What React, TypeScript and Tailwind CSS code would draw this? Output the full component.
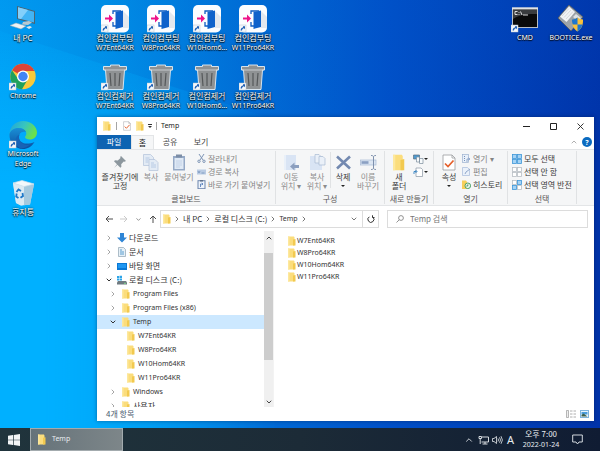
import type { ReactNode } from "react";
import { ChevronDown, ChevronRight, ChevronUp } from "lucide-react";

const latin = "font-['Noto_Sans','Noto_Sans_CJK_KR',sans-serif] text-[7px]";
const hangul = "font-['Noto_Sans_CJK_KR','Noto_Sans',sans-serif] text-[8px]";

function face(text: string) {
  return /[가-힣]/.test(text) ? hangul : latin;
}

/* ---------- desktop icons ---------- */

function ShortcutMark() {
  return (
    <g>
      <rect x="0" y="20" width="7" height="7" fill="#f4f7fa" stroke="#b9c4cf" strokeWidth="0.5" />
      <path d="M1.600 25.600c0-2 .8-3 2.400-3.200v-1.200l2 .1v2.900l-1-.9c-1.200.2-1.800 1-2 2.300z" fill="#1f5fb4" />
    </g>
  );
}

function PcIcon() {
  return (
    <svg viewBox="0 0 28 28" className="size-7">
      <path d="M8 1l18 5v13L8 14z" fill="#4b6472" />
      <path d="M9 2.300l16 4.500v10.800L9 13.200z" fill="#42b4f5" />
      <path d="M9 2.300l10 2.800-7 8.900-3-.8z" fill="#84d0fb" />
      <path d="M14 17l6-1 3 1.500-4 2.500-6-.5z" fill="#b9c8d0" />
      <path d="M1 20.500l6-2.500 10 3-5 3z" fill="#eef2f4" stroke="#9aaab3" strokeWidth="0.5" />
      <path d="M17 22l4-1 2 1.200-3 1.800z" fill="#dfe7ea" />
    </svg>
  );
}

function ChromeIcon() {
  return (
    <svg viewBox="0 0 28 28" className="size-7">
      <circle cx="14" cy="13.500" r="12.700" fill="#f9c93a" />
      <path d="M14 13.500L3 7.200A12.700 12.700 0 0 1 25.500 8H14z" fill="#db4437" />
      <path d="M3 7.200A12.700 12.700 0 0 0 13 26.200l5.500-9.500-9-.3z" fill="#1fa15d" />
      <circle cx="14" cy="13.500" r="6" fill="#fff" />
      <circle cx="14" cy="13.500" r="4.700" fill="#4285f4" />
      <ShortcutMark />
    </svg>
  );
}

function EdgeIcon() {
  return (
    <svg viewBox="0 0 28 28" className="size-7">
      <defs>
        <linearGradient id="edgeTop" x1="0" y1="0" x2="1" y2="0.4">
          <stop offset="0" stopColor="#1fa2dc" />
          <stop offset="0.55" stopColor="#37c5c0" />
          <stop offset="1" stopColor="#6be04c" />
        </linearGradient>
        <linearGradient id="edgeBody" x1="0" y1="0" x2="0" y2="1">
          <stop offset="0" stopColor="#1a8fd6" />
          <stop offset="1" stopColor="#0c4f9f" />
        </linearGradient>
      </defs>
      <path d="M.5 13C1 5 7 0 14 0c8 0 14 5.500 14 11.500 0 4.500-3.500 7-7 7-3 0-5-1.200-5-2.300 0-1 1.300-1.300 1.300-3.700C17.300 9 13 7 9.500 7 5 7 1.500 9.500.5 13z" fill="url(#edgeTop)" />
      <path d="M.5 13C1.500 9.500 5 7 9.500 7c3.500 0 6.500 1.500 7.500 4-5-1.500-7 2-7 5 0 6 7 8.500 15.500 5-2.500 4.500-7 7-11.500 7C6 28 0 21.500.5 13z" fill="url(#edgeBody)" />
      <path d="M10.500 13.500C8 20 14 25.500 21 23.500c-3 3-7 4.300-10 3.500-5.500-2.500-6-11-.5-13.500z" fill="#1763b6" />
      <ShortcutMark />
    </svg>
  );
}

function RecycleIcon() {
  return (
    <svg viewBox="0 0 28 28" className="size-7">
      <path d="M4 4l3 20 5 2.500 9-1L25 5l-11 2z" fill="#c5dfee" />
      <path d="M4 4l11 3v19l-3 .5L7 24z" fill="#dbeaf3" />
      <path d="M15 7l10-2-4 20.500-6 .7z" fill="#a5c9de" />
      <path d="M4 4l9-2.500L25 5l-10 2.500z" fill="#f3f8fb" stroke="#cfdfe9" strokeWidth="0.7" />
      <g fill="none" stroke="#1e78c8" strokeWidth="1.8">
        <path d="M7.500 13l2-2.500 2.500 1.500" />
        <path d="M13.500 14l.5 3-2.500 1.800" />
        <path d="M9.500 19l-2.300-1.500.5-3" />
      </g>
    </svg>
  );
}

function BootIcon() {
  return (
    <svg viewBox="0 0 28 28" className="size-7">
      <rect x="0" y="0" width="28" height="27.500" rx="5" fill="#fcfdff" />
      <path d="M22 6l6 6v11l-6 0z" fill="#e4e8ee" />
      <path d="M12 9V6h8M12 17v4h3" fill="none" stroke="#0d5cc2" strokeWidth="1.3" />
      <path d="M14.500 7L22 5.500v16.500l-7.500 2z" fill="#0f62cb" />
      <path d="M4 12.500h4V9.500l4 4-4 4v-3H4z" fill="#ee1289" />
      <ShortcutMark />
    </svg>
  );
}

function TrashIcon() {
  return (
    <svg viewBox="0 0 28 28" className="size-7">
      <path d="M2.500 3.500h7V2h9v1.500h7v3.500h-2L22 26.500H6L4.500 7h-2z" fill="#8f9294" stroke="#e6edf2" strokeWidth="0.9" />
      <path d="M3 7h22" stroke="#d5dadd" strokeWidth="0.8" />
      <path d="M9 10l1 13M14 10v13M19 10l-1 13" stroke="#55585a" strokeWidth="1.2" />
      <ShortcutMark />
    </svg>
  );
}

function CmdIcon() {
  return (
    <svg viewBox="0 0 28 28" className="size-7">
      <rect x="1.500" y="3" width="25" height="19.500" fill="#0a0a0a" stroke="#b8bec4" />
      <rect x="1" y="2.500" width="26" height="2" fill="#dfe3e6" />
      <path d="M2 14c8-5 16-5 24-5V5H2z" fill="#3a3c3e" />
      <path d="M6.500 6.500H4v3h2.500M8 7v.8M8 9v.8M9.500 6.500l1.500 3.500M12 10h5" fill="none" stroke="#eee" strokeWidth="0.9" />
      <ShortcutMark />
    </svg>
  );
}

function BooticeIcon() {
  return (
    <svg viewBox="0 0 28 28" className="size-7">
      <path d="M12 0l14 12-12 14L1 13z" fill="#9da3a8" stroke="#54595e" strokeWidth="0.8" />
      <path d="M12 1.500l6 5.500-8.500 10L3 11.500z" fill="#f2f3f4" />
      <path d="M5 11l7-7.500M7 12.500l7-7.500M9 14l7-7.500" stroke="#c2c6ca" strokeWidth="0.6" />
      <path d="M19 9l5 4-3 3-5-4z" fill="#dfe2e5" />
      <path d="M15 14.500c2 0 4-.7 5.500-2 1.500 1.300 3.500 2 5.500 2 .3 5.500-1.500 9.500-5.500 12-4-2.500-5.800-6.500-5.500-12z" fill="#f9c13a" />
      <path d="M20.500 12.500c-1.500 1.300-3.500 2-5.500 2 0 2 .1 3.500.7 5h4.800zM20.500 19.500v7c2.500-1.600 4.100-4 4.900-7z" fill="#1c76cf" />
    </svg>
  );
}

type Shortcut = { icon: ReactNode; lines: string[]; place?: string };

const leftIcons: Shortcut[] = [
  { icon: <PcIcon />, lines: ["내 PC"], place: "col-start-1 row-start-1" },
  { icon: <ChromeIcon />, lines: ["Chrome"], place: "col-start-1 row-start-2" },
  { icon: <EdgeIcon />, lines: ["Microsoft", "Edge"], place: "col-start-1 row-start-3" },
  { icon: <RecycleIcon />, lines: ["휴지통"], place: "col-start-1 row-start-4" },
  { icon: <BootIcon />, lines: ["컴인컴부팅", "W7Ent64KR"], place: "col-start-3 row-start-1" },
  { icon: <BootIcon />, lines: ["컴인컴부팅", "W8Pro64KR"], place: "col-start-4 row-start-1" },
  { icon: <BootIcon />, lines: ["컴인컴부팅", "W10Hom6..."], place: "col-start-5 row-start-1" },
  { icon: <BootIcon />, lines: ["컴인컴부팅", "W11Pro64KR"], place: "col-start-6 row-start-1" },
  { icon: <TrashIcon />, lines: ["컴인컴제거", "W7Ent64KR"], place: "col-start-3 row-start-2" },
  { icon: <TrashIcon />, lines: ["컴인컴제거", "W8Pro64KR"], place: "col-start-4 row-start-2" },
  { icon: <TrashIcon />, lines: ["컴인컴제거", "W10Hom6..."], place: "col-start-5 row-start-2" },
  { icon: <TrashIcon />, lines: ["컴인컴제거", "W11Pro64KR"], place: "col-start-6 row-start-2" },
];

const rightIcons: Shortcut[] = [
  { icon: <CmdIcon />, lines: ["CMD"] },
  { icon: <BooticeIcon />, lines: ["BOOTICE.exe"] },
];

function DesktopIcon({ icon, lines, place = "" }: Shortcut) {
  return (
    <button className={`flex w-[46px] flex-col items-center text-white ${place}`}>
      {icon}
      <span className="flex flex-col items-center [text-shadow:0_1px_1px_#000,0_0_2px_#000]">
        {lines.map((line) => (
          <span key={line} className={`whitespace-nowrap leading-[10px] ${face(line)}`}>
            {line}
          </span>
        ))}
      </span>
    </button>
  );
}

function Wallpaper() {
  return (
    <svg className="absolute inset-0 h-full w-full" viewBox="0 0 600 428" preserveAspectRatio="none" aria-hidden="true">
      <defs>
        <linearGradient id="sky" x1="0" y1="0" x2="1" y2="0">
          <stop offset="0" stopColor="#00a2f6" />
          <stop offset="0.17" stopColor="#0094ea" />
          <stop offset="0.4" stopColor="#0070d8" />
          <stop offset="0.65" stopColor="#0050c8" />
          <stop offset="1" stopColor="#0033a9" />
        </linearGradient>
        <linearGradient id="top" x1="0" y1="0" x2="0" y2="1">
          <stop offset="0" stopColor="#0058c8" stopOpacity="0.12" />
          <stop offset="0.35" stopColor="#0058c8" stopOpacity="0" />
        </linearGradient>
        <linearGradient id="glow" x1="0" y1="0" x2="0" y2="1">
          <stop offset="0" stopColor="#00b0ff" stopOpacity="0.15" />
          <stop offset="0.4" stopColor="#00b0ff" stopOpacity="1" />
        </linearGradient>
        <linearGradient id="fade" x1="0" y1="0" x2="1" y2="0">
          <stop offset="0.1" stopColor="#fff" />
          <stop offset="0.7" stopColor="#000" />
        </linearGradient>
        <mask id="glowMask">
          <rect width="400" height="428" fill="url(#fade)" />
        </mask>
      </defs>
      <rect width="600" height="428" fill="url(#sky)" />
      <rect width="600" height="428" fill="url(#top)" />
      <path d="M0 31L400 160V428H0z" fill="url(#glow)" mask="url(#glowMask)" />
    </svg>
  );
}

/* ---------- explorer icons ---------- */

function Folder({ className = "h-[11px] w-2" }: { className?: string }) {
  return (
    <svg viewBox="0 0 16 20" preserveAspectRatio="none" className={`shrink-0 ${className}`}>
      <path d="M0 1h12l1 2v16H0z" fill="#fbdd7c" />
      <path d="M10 7l5-1v13h-5z" fill="#f2c94f" />
      <path d="M0 1h3v18H0z" fill="#fde89d" />
    </svg>
  );
}

function PropsIcon({ className }: { className: string }) {
  return (
    <svg viewBox="0 0 14 17" className={className}>
      <path d="M1 1h9l3 3v12H1z" fill="#fff" stroke="#9a9da0" strokeWidth="0.8" />
      <path d="M10 1v3h3" fill="none" stroke="#9a9da0" strokeWidth="0.8" />
      <path d="M3 9.500l3 3 5.500-6" fill="none" stroke="#e5602c" strokeWidth="1.7" />
    </svg>
  );
}

function PinIcon() {
  return (
    <svg viewBox="0 0 16 16" className="size-4">
      <path d="M9 2l5 5-1.500.8-.8-.3-2.500 2.700.2 2.600-1 1-3-3L2 14l3-3.800-3-2.900 1-1 2.800.2L8.500 4 8.200 3z" fill="#8c979e" />
    </svg>
  );
}

function CopyIcon() {
  return (
    <svg viewBox="0 0 16 17" className="h-[17px] w-4">
      <g fill="#e3ebf5" stroke="#b2c2da" strokeWidth="0.7">
        <path d="M.5.5h7l3 3v8H.5z" />
        <path d="M6 5.500h6l3 3v8H6z" />
      </g>
      <path d="M8 9h3M8 11h5M8 13h5M2.500 4h4M2.500 6h3M2.500 8h3" stroke="#b7cae4" />
    </svg>
  );
}

function PasteIcon() {
  return (
    <svg viewBox="0 0 14 17" className="h-[17px] w-3.5">
      <rect x="1" y="2" width="12" height="14.500" fill="#95a9c6" />
      <rect x="2.500" y="4" width="9" height="11" fill="#dfe9f5" />
      <rect x="4" y="0.500" width="6" height="3" fill="#7c8da6" />
      <path d="M4 7h6M4 9h6M4 11h6M4 13h4" stroke="#bccde4" strokeWidth="0.8" />
    </svg>
  );
}

function CutIcon() {
  return (
    <svg viewBox="0 0 9 9" className="size-[9px]" fill="none" stroke="#7d94b5">
      <path d="M2 0l4 6M7 0L3 6" />
      <circle cx="2" cy="7.300" r="1.200" />
      <circle cx="7" cy="7.300" r="1.200" />
    </svg>
  );
}

function PathIcon() {
  return (
    <svg viewBox="0 0 9 9" className="size-[9px]">
      <rect y="2.500" width="9" height="5" fill="#b9cbe3" />
      <path d="M1 4l1 2 1-2M4.500 6h3" fill="none" stroke="#6f8db6" strokeWidth="0.7" />
    </svg>
  );
}

function PasteLinkIcon() {
  return (
    <svg viewBox="0 0 9 9" className="size-[9px]">
      <rect x="1" y="0.700" width="7" height="8" fill="#edf3fb" stroke="#6d85ad" />
      <path d="M3 0h3v1.500H3z" fill="#5f6f88" />
      <path d="M3.500 7V4h2M4.800 2.800L6 4 4.800 5.200" fill="none" stroke="#4a75b5" strokeWidth="0.8" />
    </svg>
  );
}

function MoveIcon() {
  return (
    <svg viewBox="0 0 17 17" className="size-[17px]">
      <path d="M1 1h12v15H1z" fill="#d9e4f4" />
      <path d="M1 1h2v15H1z" fill="#e9f0f9" />
      <path d="M7 12.500l4.500-4v2.500H16v3h-4.500V16.500z" fill="#8c9fbf" />
    </svg>
  );
}

function CopyToIcon() {
  return (
    <svg viewBox="0 0 17 17" className="size-[17px]">
      <path d="M1 2h12v14H1z" fill="#d9e4f4" />
      <g fill="#eaf0f8" stroke="#a9bad3" strokeWidth="0.7">
        <path d="M6 .5h4l2 2V9H6z" />
        <path d="M10 2.500h4l2 2V11h-6z" />
      </g>
    </svg>
  );
}

function DeleteIcon() {
  return (
    <svg viewBox="0 0 17 17" className="size-[17px]">
      <path d="M2 2.500l13 12M15 2.500l-13 12" stroke="#7389b0" strokeWidth="2.6" />
    </svg>
  );
}

function RenameIcon() {
  return (
    <svg viewBox="0 0 17 17" className="size-[17px]">
      <rect x="0.500" y="6" width="15.500" height="5" fill="#dce6f3" stroke="#a9bad3" strokeWidth="0.7" />
      <rect x="1.500" y="7.200" width="7" height="2.600" fill="#8ba0c2" />
      <path d="M11 1.500c1.500 0 2 .3 2.500 1 .5-.7 1-1 2.500-1M13.500 2.500v12M11 15.500c1.500 0 2-.3 2.500-1 .5.7 1 1 2.500 1" fill="none" stroke="#7e90ad" />
    </svg>
  );
}

function NewItemIcon() {
  return (
    <svg viewBox="0 0 11 10" className="h-2.5 w-[11px]">
      <path d="M.5 1h6v4h-6z" fill="#4d9ad0" stroke="#5c6f7e" strokeWidth="0.7" />
      <path d="M3.500 3h3v5h-3zM6.500 4.500H10V9.500H6.500z" fill="#f7fafc" stroke="#7b8d9c" strokeWidth="0.7" />
    </svg>
  );
}

function EasyAccessIcon() {
  return (
    <svg viewBox="0 0 11 10" className="h-2.5 w-[11px]">
      <path d="M3 1h5l1.500 1.500V9.500H3z" fill="#fff" stroke="#8a97a3" strokeWidth="0.7" />
      <path d="M1 7V4.500h2.500M2.500 3L4 4.500 2.500 6" fill="none" stroke="#2f7fc1" strokeWidth="0.9" />
    </svg>
  );
}

function OpenIcon() {
  return (
    <svg viewBox="0 0 9 9" className="size-[9px]">
      <rect x="0.500" y="0.500" width="6" height="8" fill="#e9f0f9" stroke="#9fb2d0" strokeWidth="0.7" />
      <path d="M2 2.500h1M2 4.500h1M2 6.500h1" stroke="#7590bb" />
      <path d="M5 8V5h2.500M6.500 3.800L8 5 6.500 6.200" fill="none" stroke="#7f99c1" strokeWidth="0.8" />
    </svg>
  );
}

function EditIcon() {
  return (
    <svg viewBox="0 0 9 9" className="size-[9px]">
      <path d="M.5.5h5l2 2v6h-7z" fill="#eaf1fa" stroke="#a8badb" strokeWidth="0.7" />
      <path d="M3 7l1-2 4-3" fill="none" stroke="#91a8cc" />
    </svg>
  );
}

function HistoryIcon() {
  return (
    <svg viewBox="0 0 9 9" className="size-[9px]">
      <path d="M0 .5h4l1 1.500v7H0z" fill="#f6cf5b" />
      <circle cx="5.800" cy="5.800" r="2.800" fill="#e8f6ec" stroke="#3e9a5a" strokeWidth="0.9" />
      <path d="M5.800 4.300v1.700H4.300" fill="none" stroke="#2d6f43" strokeWidth="0.7" />
    </svg>
  );
}

function SelectIcon({ filled }: { filled: boolean[] }) {
  return (
    <svg viewBox="0 0 10 10" className="size-2.5">
      {filled.map((on, i) => (
        <rect
          key={i}
          x={(i % 2) * 5 + 0.5}
          y={Math.floor(i / 2) * 5 + 0.5}
          width="4"
          height="4"
          fill={on ? "#a5d3f5" : "#fff"}
          stroke={on ? "#3f97d8" : "#b8bec4"}
          strokeWidth="0.8"
        />
      ))}
    </svg>
  );
}

/* ---------- ribbon ---------- */

function BigButton({ icon, label, width, muted, arrow }: { icon: ReactNode; label: string; width: string; muted?: boolean; arrow?: boolean }) {
  return (
    <button className={`flex flex-col items-center ${width} ${muted ? "text-[#8c8c8c]" : "text-[#3a3a3a]"}`}>
      <span className="flex h-5 items-center">{icon}</span>
      <span className="whitespace-pre text-center leading-[9px]">{label}</span>
      {arrow && <span className="mt-1 border-x-2 border-t-2 border-x-transparent border-t-[#222]" />}
    </button>
  );
}

function SmallButton({ icon, label, muted }: { icon: ReactNode; label: string; muted?: boolean }) {
  return (
    <button className={`flex h-[13px] items-center gap-[2px] whitespace-nowrap ${muted ? "text-[#848484]" : "text-[#3a3a3a]"}`}>
      {icon}
      {label}
    </button>
  );
}

function Group({ title, width, children }: { title: string; width: string; children: ReactNode }) {
  return (
    <div className={`flex shrink-0 flex-col border-r border-[#e0e2e4] ${width}`}>
      <div className="flex h-[43px] items-start pt-px">{children}</div>
      <div className="text-center leading-[10px] text-[#555]">{title}</div>
    </div>
  );
}

function Ribbon() {
  return (
    <div className={`flex border-y border-[#e3e5e7] bg-[#f5f6f7] py-px ${hangul}`}>
      <Group title="클립보드" width="w-[179px]">
        <BigButton icon={<PinIcon />} label={"즐겨찾기에\n고정"} width="ml-1 w-[38px]" />
        <BigButton icon={<CopyIcon />} label="복사" width="w-6" muted />
        <BigButton icon={<PasteIcon />} label="붙여넣기" width="w-8" muted />
        <div className="ml-[2px] flex flex-col">
          <SmallButton icon={<CutIcon />} label="잘라내기" muted />
          <SmallButton icon={<PathIcon />} label="경로 복사" muted />
          <SmallButton icon={<PasteLinkIcon />} label="바로 가기 붙여넣기" muted />
        </div>
      </Group>
      <Group title="구성" width="w-[109px]">
        <BigButton icon={<MoveIcon />} label={"이동\n위치 ▾"} width="ml-[2px] w-[26px]" muted />
        <BigButton icon={<CopyToIcon />} label={"복사\n위치 ▾"} width="w-[26px]" muted />
        <BigButton icon={<DeleteIcon />} label="삭제" width="border-l border-[#e0e2e4] w-[25px] h-9" arrow />
        <BigButton icon={<RenameIcon />} label={"이름\n바꾸기"} width="w-[26px]" muted />
      </Group>
      <Group title="새로 만들기" width="w-[49px]">
        <BigButton icon={<Folder className="h-[17px] w-3" />} label={"새\n폴더"} width="ml-[2px] w-6" />
        <div className="ml-[2px] flex flex-col">
          {[<NewItemIcon key="item" />, <EasyAccessIcon key="easy" />].map((icon, i) => (
            <button key={i} aria-label={i ? "빠른 연결" : "새 항목"} className="flex h-[13px] items-center">
              {icon}
              <span className="border-x-2 border-t-2 border-x-transparent border-t-[#222]" />
            </button>
          ))}
        </div>
      </Group>
      <Group title="열기" width="w-[74px]">
        <BigButton icon={<PropsIcon className="h-[17px] w-3.5" />} label="속성" width="ml-[2px] w-[26px]" arrow />
        <div className="flex flex-col">
          <SmallButton icon={<OpenIcon />} label="열기 ▾" muted />
          <SmallButton icon={<EditIcon />} label="편집" muted />
          <SmallButton icon={<HistoryIcon />} label="히스토리" />
        </div>
      </Group>
      <Group title="선택" width="w-[69px]">
        <div className="ml-1 flex flex-col">
          <SmallButton icon={<SelectIcon filled={[true, true, true, true]} />} label="모두 선택" />
          <SmallButton icon={<SelectIcon filled={[false, false, false, false]} />} label="선택 안 함" />
          <SmallButton icon={<SelectIcon filled={[false, true, true, false]} />} label="선택 영역 반전" />
        </div>
      </Group>
    </div>
  );
}

/* ---------- title bar, tabs, address ---------- */

function TitleBar() {
  return (
    <div className="flex h-[18px] items-center">
      <div className={`flex flex-1 items-center gap-1 pl-1.5 text-[#222] ${latin}`}>
        <Folder className="h-2.5 w-2" />
        <span className="ml-px h-2 w-px bg-[#a5a5a5]" />
        <button aria-label="속성" className="ml-[2px]">
          <PropsIcon className="h-2.5 w-2" />
        </button>
        <button aria-label="새 폴더" className="ml-px">
          <Folder className="h-2.5 w-2" />
        </button>
        <button aria-label="빠른 실행 도구 모음 사용자 지정" className="flex flex-col items-center gap-px">
          <span className="h-px w-1 bg-[#333]" />
          <span className="border-x-2 border-t-2 border-x-transparent border-t-[#333]" />
        </button>
        <span className="h-2 w-px bg-[#a5a5a5]" />
        <span>Temp</span>
      </div>
      <div className="flex text-[#222]">
        <button aria-label="최소화" className="grid h-[18px] w-[27px] place-items-center">
          <svg viewBox="0 0 7 7" className="size-[7px]">
            <path d="M0 3.500h7" stroke="currentColor" />
          </svg>
        </button>
        <button aria-label="최대화" className="grid h-[18px] w-[27px] place-items-center">
          <svg viewBox="0 0 7 7" className="size-[7px]">
            <path d="M.5.5h6v6h-6z" fill="none" stroke="currentColor" />
          </svg>
        </button>
        <button aria-label="닫기" className="grid h-[18px] w-[27px] place-items-center">
          <svg viewBox="0 0 7 7" className="size-[7px]">
            <path d="M.5.5l6 6M6.500.5l-6 6" stroke="currentColor" strokeWidth="0.9" />
          </svg>
        </button>
      </div>
    </div>
  );
}

function Tabs() {
  return (
    <div className={`flex h-3.5 items-stretch text-[#444] ${hangul}`}>
      <button className="w-[34px] bg-[#0d63b2] leading-3 text-white">파일</button>
      <button className="-mb-px w-[23px] border-x border-t border-[#e3e5e7] bg-[#f5f6f7] leading-3 text-[#222]">홈</button>
      <button className="w-8 leading-3">공유</button>
      <button className="w-[30px] leading-3">보기</button>
      <div className="ml-auto flex items-center gap-1 pr-[2px]">
        <button aria-label="리본 최소화">
          <ChevronUp className="size-2 text-[#888]" />
        </button>
        <button className="grid size-2.5 place-items-center rounded-full bg-[#0a6ac0] font-['Noto_Sans',sans-serif] text-[7px] font-bold leading-none text-white">
          ?
        </button>
      </div>
    </div>
  );
}

const crumbs = ["내 PC", "로컬 디스크 (C:)", "Temp"];

function AddressRow() {
  return (
    <div className="flex items-center gap-2 pb-[3px] pl-2 pr-1.5 pt-1">
      <div className="flex flex-1 items-center">
        <div className="flex w-[55px] items-center gap-[7px] text-[#4d4d4d]">
          <button aria-label="뒤로">
            <svg viewBox="0 0 8 8" className="size-2" fill="none" stroke="currentColor">
              <path d="M8 4H1M4 1L1 4l3 3" />
            </svg>
          </button>
          <button aria-label="앞으로">
            <svg viewBox="0 0 8 8" className="size-2" fill="none" stroke="#c9c9c9">
              <path d="M0 4h7M4 1l3 3-3 3" />
            </svg>
          </button>
          <button aria-label="최근 위치">
            <ChevronDown className="size-[7px]" />
          </button>
          <button aria-label="위로">
            <svg viewBox="0 0 8 8" className="size-2" fill="none" stroke="currentColor">
              <path d="M4 8V1M1 4l3-3 3 3" />
            </svg>
          </button>
        </div>
        <div className="flex h-[18px] flex-1 items-center border border-[#dcdcdc] pl-[2px] text-[#333]">
          <Folder className="h-2.5 w-2" />
          <ChevronRight className="ml-[2px] size-2" />
          {crumbs.map((crumb) => (
            <span key={crumb} className="flex items-center">
              <button className={`whitespace-nowrap px-[2px] ${face(crumb)}`}>{crumb}</button>
              <ChevronRight className="size-2" />
            </span>
          ))}
          <button aria-label="이전 위치" className="ml-auto px-1">
            <ChevronDown className="size-2" />
          </button>
          <button aria-label="새로 고침" className="grid h-full w-4 place-items-center border-l border-[#dcdcdc]">
            <svg viewBox="0 0 8 8" className="size-2" fill="none" stroke="currentColor">
              <path d="M2.300 1.800A3 3 0 1 0 6 2.200M5.500.3v2.200h2" />
            </svg>
          </button>
        </div>
      </div>
      <label className="flex h-[18px] w-[201px] items-center gap-1.5 border border-[#dcdcdc] pl-2 text-[#777]">
        <svg viewBox="0 0 8 8" className="size-2 shrink-0" fill="none" stroke="currentColor" strokeWidth="0.8">
          <circle cx="5" cy="3" r="2.400" />
          <path d="M3.300 4.700L.5 7.500" />
        </svg>
        <input
          type="search"
          aria-label="Temp 검색"
          placeholder="Temp 검색"
          className={`w-full min-w-0 bg-transparent outline-none placeholder:text-[#777] ${hangul}`}
        />
      </label>
    </div>
  );
}

/* ---------- tree and list ---------- */

function DownloadIcon() {
  return (
    <svg viewBox="0 0 10 10" className="size-2.5">
      <path d="M3 0h4v4.500h3L5 9.500 0 4.500h3z" fill="#2f86d6" />
    </svg>
  );
}

function DocIcon() {
  return (
    <svg viewBox="0 0 10 10" className="size-2.5">
      <path d="M1.500.5h5l2 2v7h-7z" fill="#e6f0f7" stroke="#8fa3b1" strokeWidth="0.7" />
      <path d="M3 3h2M3 5h4M3 7h4" stroke="#4b93c8" strokeWidth="0.9" />
    </svg>
  );
}

function DesktopFolderIcon() {
  return (
    <svg viewBox="0 0 10 10" className="size-2.5">
      <rect y="2" width="10" height="7" fill="#0a78d4" />
      <path d="M1 3h8v4H1z" fill="#1f97f2" />
    </svg>
  );
}

function DiskIcon() {
  return (
    <svg viewBox="0 0 10 10" className="size-2.5">
      <path d="M0 1h2v2H0zM2.500.8H5V3H2.500zM0 3.500h2v2H0zM2.500 3.500H5v2H2.500z" fill="#2da5e8" />
      <path d="M1 6h8l1 1.500v2H0v-2z" fill="#6f7a80" />
      <path d="M7 8.300h2" stroke="#7fe08a" strokeWidth="0.9" />
    </svg>
  );
}

type Node = { label: string; icon?: ReactNode; indent: string; state: "open" | "closed" | "leaf"; selected?: boolean };

const tree: Node[] = [
  { label: "다운로드", icon: <DownloadIcon />, indent: "pl-2", state: "closed" },
  { label: "문서", icon: <DocIcon />, indent: "pl-2", state: "closed" },
  { label: "바탕 화면", icon: <DesktopFolderIcon />, indent: "pl-2", state: "closed" },
  { label: "로컬 디스크 (C:)", icon: <DiskIcon />, indent: "pl-2", state: "open" },
  { label: "Program Files", indent: "pl-3", state: "closed" },
  { label: "Program Files (x86)", indent: "pl-3", state: "closed" },
  { label: "Temp", indent: "pl-3", state: "open", selected: true },
  { label: "W7Ent64KR", indent: "pl-[17px]", state: "leaf" },
  { label: "W8Pro64KR", indent: "pl-[17px]", state: "leaf" },
  { label: "W10Hom64KR", indent: "pl-[17px]", state: "leaf" },
  { label: "W11Pro64KR", indent: "pl-[17px]", state: "leaf" },
  { label: "Windows", indent: "pl-3", state: "closed" },
  { label: "사용자", indent: "pl-3", state: "closed" },
];

function TreeRow({ node }: { node: Node }) {
  return (
    <li>
      <button className={`flex h-3.5 w-full items-center whitespace-nowrap text-left text-[#333] ${node.indent} ${node.selected ? "bg-[#cce8ff]" : ""}`}>
        <span className="w-2">
          {node.state === "closed" && <ChevronRight className="size-2 text-[#777]" />}
          {node.state === "open" && <ChevronDown className="size-2 text-[#333]" strokeWidth={3} />}
        </span>
        <span className="ml-[3px] flex w-3 justify-center">{node.icon ?? <Folder className="h-2.5 w-2" />}</span>
        <span className={`ml-px ${face(node.label)}`}>{node.label}</span>
      </button>
    </li>
  );
}

const files = ["W7Ent64KR", "W8Pro64KR", "W10Hom64KR", "W11Pro64KR"];

function ExplorerBody() {
  return (
    <div className="flex min-h-0 flex-1">
      <ul className="w-[167px] overflow-hidden">
        {tree.map((node) => (
          <TreeRow key={node.label} node={node} />
        ))}
      </ul>
      <div className="flex w-[9px] flex-col items-center bg-[#f0f0f0] text-[#444]">
        <ChevronUp className="mt-[3px] size-2 shrink-0" strokeWidth={3} />
        <div className="mt-[11px] h-[107px] w-full bg-[#cdcdcd]" />
        <ChevronDown className="mb-px mt-auto size-2 shrink-0" strokeWidth={3} />
      </div>
      <ul className="flex-1 border-l border-[#f3f3f3] py-1 pl-3.5">
        {files.map((file) => (
          <li key={file}>
            <button className={`flex h-3 items-center gap-px leading-3 text-[#333] ${latin}`}>
              <Folder className="h-2.5 w-2" />
              {file}
            </button>
          </li>
        ))}
      </ul>
    </div>
  );
}

function Explorer() {
  return (
    <main className="absolute bottom-[7px] left-[97px] right-1.5 top-[117px] flex flex-col bg-white shadow-[0_0_4px_rgba(0,20,60,0.45)]">
      <TitleBar />
      <Tabs />
      <Ribbon />
      <AddressRow />
      <ExplorerBody />
      <footer className={`flex h-3.5 shrink-0 items-center px-[9px] text-[#4a5a70] ${hangul}`}>
        <span className="leading-3">4개 항목</span>
        <div className="-mr-1 ml-auto flex gap-1">
          <button aria-label="자세히">
            <svg viewBox="0 0 10 8" className="h-2 w-2.5">
              <path d="M.5.5h2v7h-2z" fill="#eee" stroke="#999" strokeWidth="0.7" />
              <path d="M4 1h2.500M7.500 1H10M4 4h2.500M7.500 4H10M4 7h2.500M7.500 7H10" stroke="#999" strokeWidth="0.8" />
            </svg>
          </button>
          <button aria-label="큰 아이콘">
            <svg viewBox="0 0 9 8" className="h-2 w-[9px]">
              <rect x="0.500" y="0.500" width="8" height="7" fill="#e9f4fc" stroke="#7fb4dc" />
              <path d="M1.500 2h6v2.500h-6z" fill="#4b9cdb" />
              <path d="M1.500 6.500V5l2-1.500 4 3z" fill="#3d5f4a" />
            </svg>
          </button>
        </div>
      </footer>
    </main>
  );
}

/* ---------- taskbar ---------- */

function Taskbar() {
  return (
    <footer className="flex h-[23px] shrink-0 items-stretch bg-gradient-to-r from-[#20343c] via-[#1c2b37] to-[#101c33] text-[#e8ecef]">
      <button aria-label="시작" className="grid w-[30px] place-items-center pr-[2px]">
        <svg viewBox="0 0 12 12" className="size-3" fill="#f2f5f6">
          <path d="M0 1.700l5-.7v4.700H0zM5.700.9L12 0v5.700H5.700zM0 6.300h5V11l-5-.7zM5.700 6.300H12V12l-6.300-.9z" />
        </svg>
      </button>
      <button className={`flex w-[93px] items-center gap-1.5 border border-[#a3abae] bg-gradient-to-r from-[#66737a] to-[#7d8689] pl-1.5 ${latin}`}>
        <Folder className="ml-px h-[11px] w-2" />
        Temp
      </button>
      <div className="ml-auto flex items-center pr-[17px]">
        <button aria-label="숨겨진 아이콘 표시">
          <ChevronUp className="size-2.5" />
        </button>
        <button aria-label="네트워크" className="ml-1">
          <svg viewBox="0 0 11 10" className="h-2.5 w-[11px]" fill="none" stroke="currentColor" strokeWidth="0.9">
            <path d="M4 2h6.500v5H3.500M7 7v2M4.500 9h5M1 1.500v2h2.500v-2zM2.200 3.500V9" />
          </svg>
        </button>
        <button aria-label="볼륨" className="ml-[3px]">
          <svg viewBox="0 0 11 10" className="h-2.5 w-[11px]" fill="none" stroke="currentColor" strokeWidth="0.8">
            <path d="M.5 3.500h1.500l2.500-2v7L2 6.500H.5zM6 3.500q1 1.500 0 3M7.500 2.300q2 2.700 0 5.400M9 1.200q2.800 3.800 0 7.600" />
          </svg>
        </button>
        <button aria-label="입력 언어" className="ml-1 font-['Noto_Sans',sans-serif] text-[11px] leading-none">
          A
        </button>
        <button className="mx-1.5 flex w-[42px] flex-col items-center">
          <span className={`leading-[10px] ${hangul}`}>오후 7:00</span>
          <span className="font-['Noto_Sans',sans-serif] text-[7px] leading-[11px]">2022-01-24</span>
        </button>
        <button aria-label="알림 센터" className="ml-1">
          <svg viewBox="0 0 11 11" className="size-[11px]" fill="none" stroke="currentColor" strokeWidth="0.9">
            <path d="M.7 1h9.600v7H7L5.500 10 4 8H.7z" />
          </svg>
        </button>
      </div>
    </footer>
  );
}

export default function App() {
  return (
    <div className="flex h-screen flex-col overflow-hidden">
      <div className="relative flex-1">
        <Wallpaper />
        <div className="relative flex items-start justify-between pr-1.5 pt-[5px]">
          <div className="grid auto-rows-[58px] grid-cols-[repeat(6,46px)] items-start">
            {leftIcons.map((item) => (
              <DesktopIcon key={item.lines.join()} {...item} />
            ))}
          </div>
          <div className="flex">
            {rightIcons.map((item) => (
              <DesktopIcon key={item.lines.join()} {...item} />
            ))}
          </div>
        </div>
        <Explorer />
      </div>
      <Taskbar />
    </div>
  );
}
